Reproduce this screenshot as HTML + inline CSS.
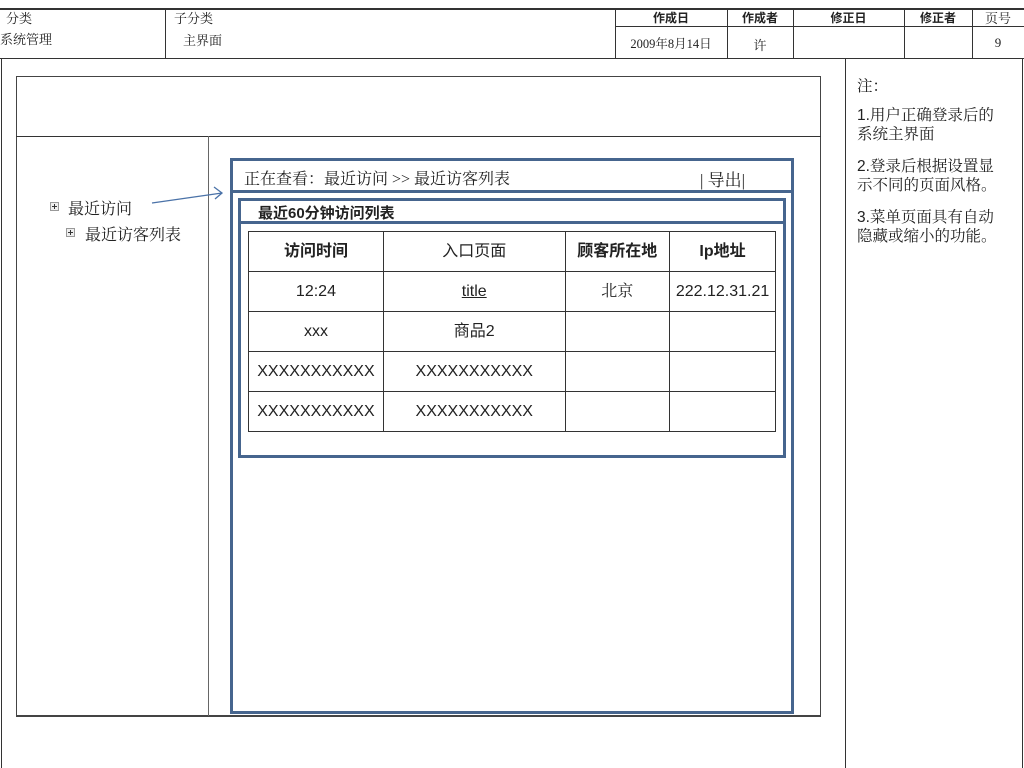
<!DOCTYPE html>
<html><head><meta charset="utf-8"><style>
*{margin:0;padding:0;box-sizing:border-box}
body{width:1024px;height:768px;background:#fff;position:relative;overflow:hidden;font-family:"Liberation Serif","Noto Serif CJK SC",serif;color:#222}
.a{position:absolute}
.h{position:absolute;height:0;border-top:1px solid #333}
.v{position:absolute;width:0;border-left:1px solid #333}
.t{position:absolute;font-size:13px;white-space:nowrap}
.c{text-align:center}
.s{font-family:"Liberation Sans","Noto Sans CJK SC",sans-serif}
.blue{position:absolute;border:3px solid #46658e}
td{border:1.5px solid #333;text-align:center;vertical-align:middle;font-family:"Liberation Sans","Noto Sans CJK SC",sans-serif;font-size:16px;height:40px;line-height:20px;padding:0}
table{border-collapse:collapse}
.n{position:absolute;left:857px;font-size:15.5px;line-height:19px;font-family:"Liberation Sans","Noto Serif CJK SC",serif}
.ic{position:absolute;width:9px;height:9px;border:1px solid #999;background:#eee}
.ic:after{content:"";position:absolute;left:1px;top:3px;width:5px;height:1px;background:#333}
.ic:before{content:"";position:absolute;left:3px;top:1px;width:1px;height:5px;background:#333}
</style></head><body>
<!-- header -->
<div class="h" style="left:0;top:8px;width:1024px;border-top-width:2px"></div>
<div class="h" style="left:615px;top:26px;width:409px"></div>
<div class="h" style="left:0;top:58px;width:1024px"></div>
<div class="v" style="left:165px;top:8px;height:51px"></div>
<div class="v" style="left:615px;top:8px;height:51px"></div>
<div class="v" style="left:727px;top:8px;height:51px"></div>
<div class="v" style="left:793px;top:8px;height:51px"></div>
<div class="v" style="left:904px;top:8px;height:51px"></div>
<div class="v" style="left:972px;top:8px;height:51px"></div>
<div class="t" style="left:6px;top:8px">分类</div>
<div class="t" style="left:0;top:29px">系统管理</div>
<div class="t" style="left:174px;top:8px">子分类</div>
<div class="t" style="left:183px;top:30px">主界面</div>
<div class="t c s" style="left:615px;width:112px;top:9px;font-size:12px;font-weight:bold">作成日</div>
<div class="t c s" style="left:727px;width:66px;top:9px;font-size:12px;font-weight:bold">作成者</div>
<div class="t c s" style="left:793px;width:111px;top:9px;font-size:12px;font-weight:bold">修正日</div>
<div class="t c s" style="left:904px;width:68px;top:9px;font-size:12px;font-weight:bold">修正者</div>
<div class="t c" style="left:972px;width:52px;top:8px">页号</div>
<div class="t c" style="left:615px;width:112px;top:34px;font-size:12.5px">2009年8月14日</div>
<div class="t c" style="left:727px;width:66px;top:35px">许</div>
<div class="t c" style="left:972px;width:52px;top:35px">9</div>
<!-- body frame -->
<div class="v" style="left:1px;top:58px;height:710px"></div>
<div class="v" style="left:845px;top:58px;height:710px"></div>
<div class="v" style="left:1022px;top:58px;height:710px"></div>
<div class="a" style="left:16px;top:76px;width:805px;height:641px;border:1px solid #444;border-bottom-width:2px"></div>
<div class="h" style="left:16px;top:136px;width:805px"></div>
<div class="v" style="left:208px;top:136px;height:580px;border-color:#666"></div>
<!-- tree -->
<div class="ic" style="left:50px;top:202px"></div>
<div class="t" style="left:68px;top:196px;font-size:16px">最近访问</div>
<div class="ic" style="left:66px;top:228px"></div>
<div class="t" style="left:85px;top:222px;font-size:16px">最近访客列表</div>
<svg class="a" style="left:0;top:0" width="1024" height="768"><path d="M152 203 L222 193 M214 187 L222 193 L215 199" fill="none" stroke="#4a72a8" stroke-width="1.3"/></svg>
<!-- blue frame -->
<div class="blue" style="left:230px;top:158px;width:564px;height:556px"></div>
<div class="h" style="left:231px;top:190px;width:562px;border-top:3px solid #46658e"></div>
<div class="t" style="left:244px;top:166px;font-size:16px">正在查看：最近访问 &gt;&gt; 最近访客列表</div>
<div class="t" style="left:700px;top:166px;font-size:17px">| 导出|</div>
<div class="blue" style="left:238px;top:198px;width:548px;height:260px"></div>
<div class="h" style="left:239px;top:221px;width:546px;border-top:3px solid #46658e"></div>
<div class="t s" style="left:258px;top:202px;font-size:15px;font-weight:bold">最近60分钟访问列表</div>
<table class="a" style="left:248px;top:231px;width:528px">
<colgroup><col style="width:135px"><col style="width:182px"><col style="width:105px"><col style="width:106px"></colgroup>
<tr><td style="font-weight:bold">访问时间</td><td>入口页面</td><td style="font-weight:bold">顾客所在地</td><td style="font-weight:bold">Ip地址</td></tr>
<tr><td>12:24</td><td style="text-decoration:underline">title</td><td style="font-family:'Liberation Serif','Noto Serif CJK SC',serif">北京</td><td>222.12.31.21</td></tr>
<tr><td>xxx</td><td>商品2</td><td></td><td></td></tr>
<tr><td>XXXXXXXXXXX</td><td>XXXXXXXXXXX</td><td></td><td></td></tr>
<tr><td>XXXXXXXXXXX</td><td>XXXXXXXXXXX</td><td></td><td></td></tr>
</table>
<!-- notes -->
<div class="n" style="top:77px">注：</div>
<div class="n" style="top:106px">1.用户正确登录后的<br>系统主界面</div>
<div class="n" style="top:157px">2.登录后根据设置显<br>示不同的页面风格。</div>
<div class="n" style="top:208px">3.菜单页面具有自动<br>隐藏或缩小的功能。</div>
</body></html>
